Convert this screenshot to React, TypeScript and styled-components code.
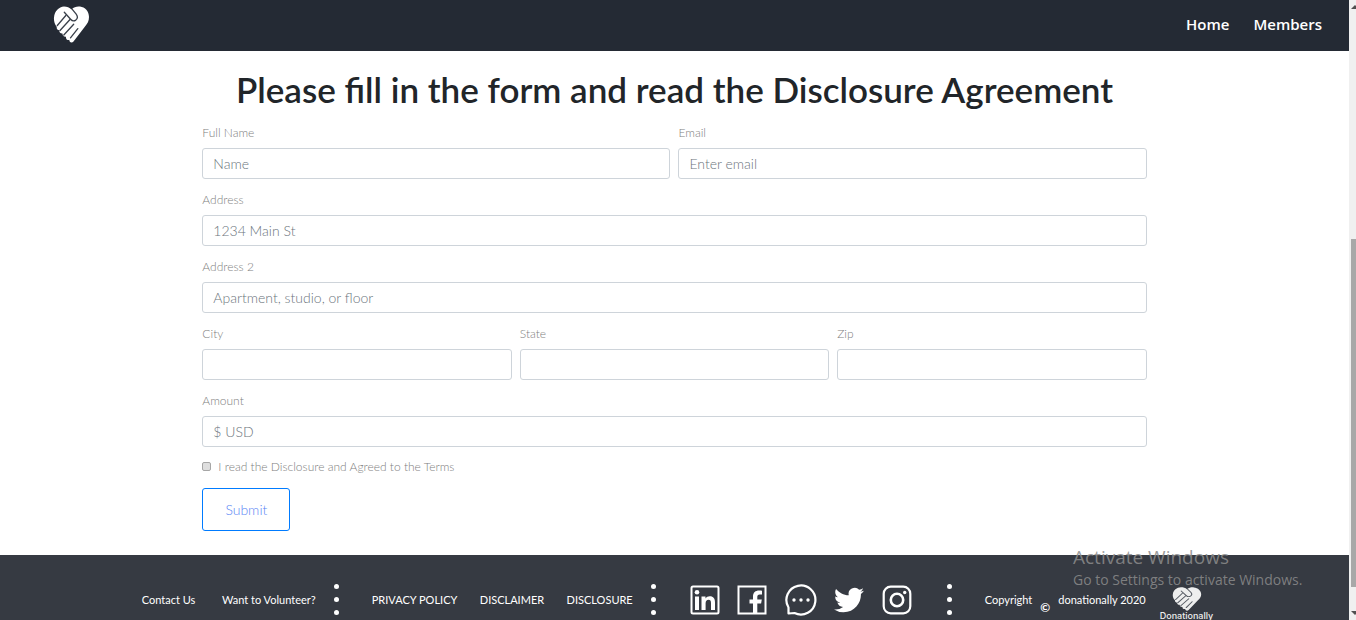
import React from "react";
import styled, { createGlobalStyle } from "styled-components";

const GlobalStyle = createGlobalStyle`
  *, *::before, *::after { box-sizing: border-box; }
  body {
    margin: 0;
    overflow: hidden;
    background: #fff;
    color: #212529;
    font-family: Lato, "Liberation Sans", sans-serif;
  }
`;

const Viewport = styled.div`
  display: grid;
  grid-template-columns: minmax(0, 1fr) 7px;
  height: 100vh;
  overflow: hidden;
`;

const Page = styled.div`
  display: flex;
  flex-direction: column;
  min-height: 0;
  overflow: hidden;
`;

const NavBar = styled.header`
  display: flex;
  flex: none;
  align-items: center;
  justify-content: space-between;
  height: 51px;
  padding: 0 27px 3px 53px;
  background: #242a34;
`;

const NavLinks = styled.nav`
  display: flex;
  gap: 24px;
`;

const NavLink = styled.a`
  color: #fff;
  font: 600 15px/20px "Open Sans", "Noto Sans", sans-serif;
  text-decoration: none;
`;

const HomeLink = styled.a`
  display: flex;
`;

const Main = styled.main`
  flex: none;
  width: 70%;
  margin: 0 auto;
  padding: 18px 0 24px;
`;

const Title = styled.h1`
  margin: 0 0 15px;
  font-size: 35px;
  font-weight: 600;
  line-height: 40px;
  text-align: center;
  white-space: nowrap;
`;

const Form = styled.form`
  display: flex;
  flex-direction: column;
  gap: 12px;
`;

const Row = styled.div`
  display: grid;
  grid-auto-flow: column;
  grid-auto-columns: minmax(0, 1fr);
  gap: 8px;
`;

const Field = styled.div`
  display: flex;
  flex-direction: column;
  gap: 6px;
`;

const Label = styled.label`
  color: #808080;
  font-size: 12px;
  font-weight: 300;
  line-height: 18px;
`;

const TextInput = styled.input`
  width: 100%;
  height: 31px;
  padding: 0 10px;
  border: 1px solid #ced4da;
  border-radius: 3px;
  background: #fff;
  color: #495057;
  font: 300 14px/20px Lato, "Liberation Sans", sans-serif;
  &::placeholder {
    color: #6c757d;
    opacity: 1;
  }
`;

const CheckRow = styled.div`
  display: flex;
  align-items: center;
  gap: 7px;
  height: 15px;
`;

const CheckBox = styled.input`
  appearance: none;
  width: 9px;
  height: 9px;
  margin: 0;
  border: 1px solid #a6a6a6;
  border-radius: 2px;
  background: #dedede;
  &:checked {
    background: #007bff;
  }
`;

const SubmitButton = styled.button`
  align-self: flex-start;
  width: 88px;
  height: 43px;
  margin-top: 2px;
  border: 1px solid #007bff;
  border-radius: 3px;
  background: #fff;
  color: #5a86f5;
  font: 300 14px/20px Lato, "Liberation Sans", sans-serif;
`;

const Footer = styled.footer`
  display: flex;
  flex: 1 0 auto;
  align-items: flex-start;
  justify-content: center;
  padding: 29px 0 0 6px;
  background: #363a42;
`;

const FooterGroup = styled.div<{ $width: number }>`
  display: flex;
  flex: none;
  align-items: center;
  justify-content: space-between;
  width: ${(p) => p.$width}px;
  height: 32px;
`;

const FooterLink = styled.a`
  color: #fff;
  font-size: 11px;
  line-height: 16px;
  text-decoration: none;
  white-space: nowrap;
`;

const SocialLink = styled.a`
  display: flex;
`;

const Dots = styled.div<{ $before: number; $after: number }>`
  display: flex;
  flex: none;
  flex-direction: column;
  gap: 8px;
  margin: 0 ${(p) => p.$after}px 0 ${(p) => p.$before}px;
`;

const Dot = styled.span`
  width: 5px;
  height: 5px;
  border-radius: 50%;
  background: #fff;
`;

const FooterText = styled.span`
  color: #fff;
  font-size: 11px;
  line-height: 16px;
  white-space: nowrap;
`;

const CopyrightMark = styled.span`
  align-self: flex-end;
  color: #fff;
  font-size: 12px;
  font-weight: 700;
  line-height: 16px;
`;

const Brand = styled.a`
  display: flex;
  flex: none;
  flex-direction: column;
  align-items: center;
  margin: 3px 0 0 14px;
  color: #eee;
  font: 500 9px/9px Inter, sans-serif;
  text-decoration: none;
`;

const Watermark = styled.div`
  position: absolute;
  right: 47px;
  bottom: 30px;
  min-width: 236px;
  color: rgba(140, 140, 140, 0.85);
  font-family: "Open Sans", "Noto Sans", sans-serif;
  white-space: nowrap;
  pointer-events: none;
`;

const WatermarkTitle = styled.div`
  font-size: 19px;
  line-height: 25px;
`;

const WatermarkText = styled.div`
  font-size: 14px;
  line-height: 20px;
`;

const ScrollTrack = styled.div`
  display: flex;
  flex-direction: column;
  align-items: flex-end;
  justify-content: space-between;
  padding: 5px 0;
  background: #f0f0f0;
`;

const ScrollThumb = styled.div`
  flex: 0 0 57%;
  width: 5px;
  margin-top: auto;
  margin-bottom: 23px;
  background: #a8a8a8;
`;

type HeartProps = { width: number; height: number; ink: string; fill: string };

const HeartLogo = ({ width, height, ink, fill }: HeartProps) => (
  <svg width={width} height={height} viewBox="0 0 37 37" preserveAspectRatio="none" aria-hidden="true">
    <path
      fill={fill}
      d="M18.500 3.500C21 .8 24 .3 27 .6c5 .6 9 4.900 9 10.400 0 4-1.500 6.500-4 9.500L20.500 35.500c-1.500 1.800-4 1.200-4.200-1.500-2 .4-3.700-1-3.300-3.200-2 .3-3.700-1.200-3.500-3.300-2 .3-3.500-1.300-3.200-3.300-1.800 0-3-1.500-2.500-3.200C1.500 18 .7 14.500 1 11.500 1.500 5 6 .8 11 .5c3 0 5.500 1 7.500 3z"
    />
    <g fill="none" stroke={ink} strokeWidth="1.300" strokeLinecap="round">
      <path d="M19.300 3.300l3.900 4.900c1.600 2.200 1.300 4.600-.4 5.900-1.700 1.200-3.700.9-5.200-.8L11.300 6.200" />
      <path d="M12.800 9.500L4.300 19.500" />
      <path d="M17 13.500L7 24.500" />
      <path d="M20.700 18.200L10.800 29" />
      <path d="M24.800 22.600l-7.300 9.200" />
    </g>
  </svg>
);

const Separator = ({ before, after }: { before: number; after: number }) => (
  <Dots $before={before} $after={after}>
    <Dot />
    <Dot />
    <Dot />
  </Dots>
);

const LinkedInIcon = () => (
  <svg width="30" height="30" viewBox="0 0 30 30" fill="#fff" aria-hidden="true">
    <rect x="1.500" y="1.500" width="27" height="27" rx="1.500" fill="none" stroke="#fff" strokeWidth="2" />
    <circle cx="7" cy="7.300" r="2.300" />
    <path d="M5 11.500h4V25H5zM11.500 11.500h4v1.900c1-1.500 2.400-2.200 4.300-2.200 3.700 0 5.200 2.300 5.200 6.200V25h-4v-7c0-2.200-.7-3.300-2.400-3.300-2 0-3 1.300-3 3.600V25h-4.100z" />
  </svg>
);

const FacebookIcon = () => (
  <svg width="30" height="30" viewBox="0 0 30 30" fill="#fff" aria-hidden="true">
    <rect x="1.500" y="1.500" width="27" height="27" fill="none" stroke="#fff" strokeWidth="2" />
    <path d="M16 28.500V18.500h-3.500v-4H16v-3c0-4 2.500-6 6-6 1.200 0 2.300.1 3 .2v3.700h-2.200c-2 0-2.500 1-2.500 2.400v2.700h4.500l-.7 4h-3.800v10z" />
  </svg>
);

const ChatIcon = () => (
  <svg width="32" height="32" viewBox="0 0 32 32" fill="#fff" aria-hidden="true">
    <path
      d="M3.500 29.500V23.500A14.500 14.500 0 1 1 9.500 29z"
      fill="none"
      stroke="#fff"
      strokeWidth="2.200"
      strokeLinejoin="round"
    />
    <circle cx="9" cy="16" r="1.700" />
    <circle cx="16" cy="16" r="1.700" />
    <circle cx="23" cy="16" r="1.700" />
  </svg>
);

const TwitterIcon = () => (
  <svg width="30" height="30" viewBox="0 0 24 24" fill="#fff" aria-hidden="true">
    <path d="M23.950 4.570a10 10 0 0 1-2.820.77 4.960 4.960 0 0 0 2.160-2.720c-.95.550-2 .95-3.130 1.180a4.920 4.920 0 0 0-8.380 4.480C7.690 8.090 4.070 6.130 1.640 3.160a4.820 4.820 0 0 0-.67 2.480c0 1.710.87 3.210 2.190 4.100a4.900 4.900 0 0 1-2.230-.62v.06a4.920 4.920 0 0 0 3.950 4.830 5 5 0 0 1-2.210.08 4.940 4.940 0 0 0 4.600 3.420A9.870 9.870 0 0 1 0 19.540a13.990 13.990 0 0 0 7.550 2.210c9.050 0 14-7.500 14-13.980 0-.21 0-.42-.02-.63a9.940 9.940 0 0 0 2.420-2.570z" />
  </svg>
);

const InstagramIcon = () => (
  <svg width="30" height="30" viewBox="0 0 30 30" fill="none" stroke="#fff" aria-hidden="true">
    <rect x="1.700" y="1.700" width="26.600" height="26.600" rx="7" strokeWidth="2.200" />
    <circle cx="15" cy="15" r="6.200" strokeWidth="2.600" />
    <circle cx="22.700" cy="7.500" r="1.700" fill="#fff" stroke="none" />
  </svg>
);

type FieldProps = { id: string; label: string; placeholder?: string; type?: string };

const FormField = ({ id, label, placeholder, type = "text" }: FieldProps) => (
  <Field>
    <Label htmlFor={id}>{label}</Label>
    <TextInput id={id} type={type} placeholder={placeholder} />
  </Field>
);

const socials = [
  { name: "LinkedIn", Icon: LinkedInIcon },
  { name: "Facebook", Icon: FacebookIcon },
  { name: "Chat", Icon: ChatIcon },
  { name: "Twitter", Icon: TwitterIcon },
  { name: "Instagram", Icon: InstagramIcon },
];

export default function App() {
  return (
    <>
      <GlobalStyle />
      <Viewport>
        <Page>
          <NavBar>
            <HomeLink href="#" aria-label="Donationally">
              <HeartLogo width={37} height={37} ink="#3a404a" fill="#fff" />
            </HomeLink>
            <NavLinks>
              <NavLink href="#home">Home</NavLink>
              <NavLink href="#members">Members</NavLink>
            </NavLinks>
          </NavBar>
          <Main>
            <Title>Please fill in the form and read the Disclosure Agreement</Title>
            <Form onSubmit={(e) => e.preventDefault()}>
              <Row>
                <FormField id="name" label="Full Name" placeholder="Name" />
                <FormField id="email" label="Email" placeholder="Enter email" type="email" />
              </Row>
              <FormField id="address" label="Address" placeholder="1234 Main St" />
              <FormField id="address2" label="Address 2" placeholder="Apartment, studio, or floor" />
              <Row>
                <FormField id="city" label="City" />
                <FormField id="state" label="State" />
                <FormField id="zip" label="Zip" />
              </Row>
              <FormField id="amount" label="Amount" placeholder="$ USD" />
              <CheckRow>
                <CheckBox id="terms" type="checkbox" />
                <Label htmlFor="terms">I read the Disclosure and Agreed to the Terms</Label>
              </CheckRow>
              <SubmitButton type="submit">Submit</SubmitButton>
            </Form>
          </Main>
          <Footer>
            <FooterGroup $width={174}>
              <FooterLink href="#contact">Contact Us</FooterLink>
              <FooterLink href="#volunteer">Want to Volunteer?</FooterLink>
            </FooterGroup>
            <Separator before={18} after={33} />
            <FooterGroup $width={261}>
              <FooterLink href="#privacy">PRIVACY POLICY</FooterLink>
              <FooterLink href="#disclaimer">DISCLAIMER</FooterLink>
              <FooterLink href="#disclosure">DISCLOSURE</FooterLink>
            </FooterGroup>
            <Separator before={18} after={34} />
            <FooterGroup $width={222}>
              {socials.map(({ name, Icon }) => (
                <SocialLink key={name} href={"#" + name.toLowerCase()} aria-label={name}>
                  <Icon />
                </SocialLink>
              ))}
            </FooterGroup>
            <Separator before={35} after={33} />
            <FooterGroup $width={161}>
              <FooterText>Copyright</FooterText>
              <CopyrightMark>©</CopyrightMark>
              <FooterText>donationally 2020</FooterText>
            </FooterGroup>
            <Brand href="#">
              <HeartLogo width={30} height={24} ink="#555a62" fill="#eee" />
              Donationally
            </Brand>
          </Footer>
        </Page>
        <ScrollTrack aria-hidden="true">
          <svg width="5" height="5" viewBox="0 0 5 5">
            <path d="M0 4L4 0l1 1v3z" fill="#505050" />
          </svg>
          <ScrollThumb />
          <svg width="5" height="5" viewBox="0 0 5 5">
            <path d="M0 1h5v3L4 5z" fill="#505050" />
          </svg>
        </ScrollTrack>
      </Viewport>
      <Watermark>
        <WatermarkTitle>Activate Windows</WatermarkTitle>
        <WatermarkText>Go to Settings to activate Windows.</WatermarkText>
      </Watermark>
    </>
  );
}
